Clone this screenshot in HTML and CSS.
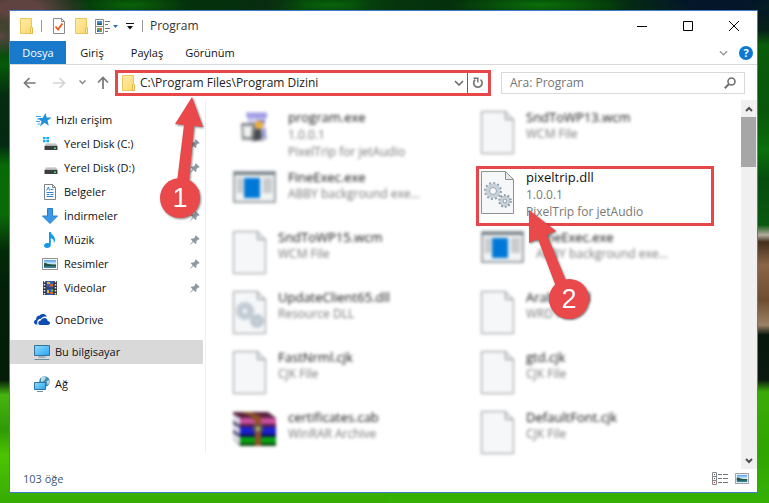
FILE: index.html
```html
<!DOCTYPE html>
<html lang="tr">
<head>
<meta charset="utf-8">
<title>Program</title>
<link rel="stylesheet" href="styles.css">
</head>
<body>
<svg width="0" height="0" class="defs" aria-hidden="true">
  <defs>
    <linearGradient id="gFolder" x1="0" y1="0" x2="1" y2="1"><stop offset="0" stop-color="#ffecaa"/><stop offset="1" stop-color="#fbd869"/></linearGradient>
    <linearGradient id="gScreen" x1="0" y1="0" x2="1" y2="1"><stop offset="0" stop-color="#8fdcff"/><stop offset="1" stop-color="#2aa3f2"/></linearGradient>
    <linearGradient id="gDisk" x1="0" y1="0" x2="0" y2="1"><stop offset="0" stop-color="#e4e4e4"/><stop offset="1" stop-color="#a8a8a8"/></linearGradient>
    <linearGradient id="gPic" x1="0" y1="0" x2="0" y2="1"><stop offset="0" stop-color="#4a9ff0"/><stop offset=".5" stop-color="#d9effb"/><stop offset=".6" stop-color="#2c5d4f"/><stop offset="1" stop-color="#3b87b4"/></linearGradient>
    <symbol id="folder" viewBox="0 0 13 16"><path d="M.5.5h11v8.5l1 1v5.5H.5z" fill="url(#gFolder)" stroke="#eac65c"/><path d="M10.500 15.500V10l1-1 1 1v5.500z" fill="#fff0b8" stroke="#dfb84c"/></symbol>
    <symbol id="pin" viewBox="0 0 10 10"><path d="M5.800.300l3.900 3.700-1 .7-.8-.1-1.500 1.700.1 2-.9.800L3.500 7 .300 9.800 0 9.500 2.700 6.300.700 4.200l.9-.8 2 .1 1.700-1.600-.2-.8z" fill="#8c98a3"/></symbol>
    <symbol id="picture" viewBox="0 0 16 12"><path d="M.5.5h15v11H.5z" fill="#fff" stroke="#8b9196"/><path d="M2 2h12v8H2z" fill="url(#gPic)"/><path d="M2 5c3 0 5 2 12 2v1H2z" fill="#23523f"/></symbol>
    <symbol id="page" viewBox="0 0 33 43"><path d="M.5.5h24l8 8v34H.5z" fill="#f5f7f9" stroke="#8f9295"/><path d="M24.500.500v8h8z" fill="#e6e9eb" stroke="#8f9295"/></symbol>
    <symbol id="gears" viewBox="0 0 28 28">
      <circle cx="9" cy="9" r="5.500" fill="none" stroke="#c6d1da" stroke-width="4"/>
      <circle cx="9" cy="9" r="8" fill="none" stroke="#98a4ae" stroke-width="2" stroke-dasharray="2 2.190"/>
      <circle cx="9" cy="9" r="3.500" fill="#f5f7f9" stroke="#98a4ae"/>
      <circle cx="21" cy="19" r="4" fill="none" stroke="#c6d1da" stroke-width="3"/>
      <circle cx="21" cy="19" r="5.800" fill="none" stroke="#8c98a3" stroke-width="2" stroke-dasharray="1.800 1.850"/>
      <circle cx="21" cy="19" r="2" fill="#f5f7f9" stroke="#8c98a3"/>
    </symbol>
    <symbol id="exe" viewBox="0 0 43 32"><path d="M1 1h41v30H1z" fill="#f2f3f3" stroke="#98a0a4" stroke-width="2"/><path d="M1 1h41v3H1z" fill="#78838a"/><path d="M4 7h6v15H4zM30 7h9v15h-9z" fill="#c9cbcc"/><path d="M11 7h16v20H11z" fill="#0078d7"/></symbol>
    <symbol id="down" viewBox="0 0 10 6"><path d="M1 1l4 4 4-4" fill="none" stroke="currentColor" stroke-width="1.500"/></symbol>
  </defs>
</svg>

<main class="window">
  <header class="titlebar">
    <svg class="t-folder" width="13" height="16"><use href="#folder"/></svg>
    <span class="sep"></span>
    <button class="plain" aria-label="Özellikler"><svg width="12" height="16" viewBox="0 0 12 16"><path d="M.5.5h8l3 3v12H.5z" fill="#fff" stroke="#8a8a8a"/><path d="M8.500.500v3h3" fill="none" stroke="#8a8a8a"/><path d="M2.500 8.500l2.500 3 4.500-6" fill="none" stroke="#e8591c" stroke-width="1.800"/></svg></button>
    <button class="plain" aria-label="Yeni klasör"><svg width="13" height="16"><use href="#folder"/></svg></button>
    <button class="plain view" aria-label="Görünüm seçenekleri"><svg width="23" height="15" viewBox="0 0 23 15"><path d="M.5.5h8v14h-8zM.5 7.500h8" fill="#fff" stroke="#8a8a8a"/><path d="M2 2h5v4H2z" fill="#3d8fd6"/><path d="M2 4.500h5V6H2z" fill="#2d6047"/><path d="M2 9h5v4H2z" fill="#6eaa3c"/><path d="M4.500 9h2v2h-2z" fill="#e45b28"/><path d="M2 11h2v2H2z" fill="#316cc4"/><path d="M10 2.500h5M10 5.500h3M10 9.500h5M10 12.500h3" stroke="#777"/><path d="M18 6h5l-2.500 3z" fill="#2f6ab5"/></svg></button>
    <button class="plain" aria-label="Özelleştir"><svg width="8" height="7" viewBox="0 0 8 7"><path d="M0 .5h8" stroke="#111"/><path d="M1 3h6L4 6.500z" fill="#111"/></svg></button>
    <span class="sep"></span>
    <h1>Program</h1>
    <div class="controls">
      <button aria-label="Simge durumuna küçült"><svg width="11" height="11" viewBox="0 0 11 11"><path d="M0 5.500h10" stroke="#000"/></svg></button>
      <button aria-label="Ekranı kapla"><svg width="10" height="10" viewBox="0 0 10 10"><path d="M.5.5h9v9h-9z" fill="none" stroke="#000"/></svg></button>
      <button aria-label="Kapat"><svg width="10" height="10" viewBox="0 0 10 10"><path d="M0 0l10 10M10 0L0 10" stroke="#000"/></svg></button>
    </div>
  </header>

  <nav class="ribbon">
    <button class="tab active">Dosya</button>
    <button class="tab">Giriş</button>
    <button class="tab">Paylaş</button>
    <button class="tab wide">Görünüm</button>
    <button class="expand" aria-label="Şeridi genişlet"><svg width="9" height="6"><use href="#down"/></svg></button>
    <button class="help" aria-label="Yardım">?</button>
  </nav>

  <div class="navbar">
    <button class="arrow" aria-label="Geri"><svg width="13" height="12" viewBox="0 0 13 12"><path d="M12.500 6H1.500M6.500 1l-5 5 5 5" fill="none" stroke="#777" stroke-width="1.700"/></svg></button>
    <button class="arrow" aria-label="İleri"><svg width="13" height="12" viewBox="0 0 13 12"><path d="M0 6h11.500M6.500 1l5 5-5 5" fill="none" stroke="#d4d4d4" stroke-width="1.700"/></svg></button>
    <button class="recent" aria-label="Son konumlar"><svg width="7" height="5" viewBox="0 0 7 5"><path d="M.5.5l3 3 3-3" fill="none" stroke="#888" stroke-width="1.500"/></svg></button>
    <button class="up" aria-label="Yukarı"><svg width="12" height="13" viewBox="0 0 12 13"><path d="M6 13V1.500M1 6.500l5-5 5 5" fill="none" stroke="#777" stroke-width="1.700"/></svg></button>
    <div class="address">
      <svg width="13" height="16"><use href="#folder"/></svg>
      <input type="text" aria-label="Adres" value="C:\Program Files\Program Dizini">
      <button class="drop" aria-label="Önceki konumlar"><svg width="10" height="6"><use href="#down"/></svg></button>
      <button class="refresh" aria-label="Yenile"><svg width="12" height="12" viewBox="0 0 12 12"><path d="M3.300 2.700A4.200 4.200 0 1 0 8.500 2.700" fill="none" stroke="#777" stroke-width="1.700"/><path d="M1.500 1.300h4.300v4.300" fill="none" stroke="#777" stroke-width="1.500"/></svg></button>
      <svg class="callout one" width="50" height="130" viewBox="0 0 50 130" role="img" aria-label="1">
        <path d="M33 2l11 30-9-1-5 56H18l7-57-9-1z" fill="#e9494b"/>
        <circle cx="21" cy="103" r="20" fill="#e9494b"/>
        <text x="21" y="112">1</text>
      </svg>
    </div>
    <label class="search"><input type="text" aria-label="Ara: Program" placeholder="Ara: Program"><svg width="12" height="12" viewBox="0 0 12 12"><circle cx="7.500" cy="4.500" r="3.500" fill="none" stroke="#707070" stroke-width="1.600"/><path d="M5 7L.8 11.200" stroke="#707070" stroke-width="2"/></svg></label>
  </div>

  <div class="body">
    <aside class="sidebar">
      <a class="row top" href="#"><svg width="16" height="14" viewBox="0 0 16 14"><path d="M9.500 0l1.200 4.600 5-.1-4.200 3 1.300 5.200-4.300-3L4 13.500l1.600-5L2 5.300l4.800-.5z" fill="#1e90dc"/><path d="M0 3.500h5M1 6h3M0 8.500h4M1.500 11h3" stroke="#3aa5ea"/></svg><span>Hızlı erişim</span></a>
      <a class="row" href="#"><svg width="16" height="16" viewBox="0 0 16 16"><path d="M1 1h2.500v2.300H1zM4.300 1H7v2.300H4.300zM1 4h2.500v2.300H1zM4.300 4H7v2.300H4.300z" fill="#12aef0"/><path d="M4 7h10l1.500 3h-13z" fill="url(#gDisk)"/><path d="M2.500 10h13v4h-13z" fill="#3c3f42"/><path d="M12 11.500h2v1.500h-2z" fill="#3ee75f"/></svg><span>Yerel Disk (C:)</span><svg class="pin"><use href="#pin"/></svg></a>
      <a class="row" href="#"><svg width="16" height="16" viewBox="0 0 16 16"><path d="M4 7h10l1.500 3h-13z" fill="url(#gDisk)"/><path d="M2.500 10h13v4h-13z" fill="#3c3f42"/><path d="M12 11.500h2v1.500h-2z" fill="#3ee75f"/></svg><span>Yerel Disk (D:)</span><svg class="pin"><use href="#pin"/></svg></a>
      <a class="row" href="#"><svg width="16" height="16" viewBox="0 0 16 16"><path d="M2.500.5h8l3 3v12h-11z" fill="#fff" stroke="#7d8489"/><path d="M10.500.500v3h3" fill="none" stroke="#7d8489"/><path d="M4.500 6.500l2-3.500 1 3.500M8.500 5.500h3M4.500 8.500h7M4.500 10.500h3M8.500 10.500h3M4.500 12.500h7" fill="none" stroke="#2f86cf"/></svg><span>Belgeler</span><svg class="pin"><use href="#pin"/></svg></a>
      <a class="row" href="#"><svg width="16" height="16" viewBox="0 0 16 16"><path d="M5.500.5h5V8h5L8 15.500.5 8h5z" fill="#3a98e8" stroke="#2a7fcb"/></svg><span>İndirmeler</span><svg class="pin"><use href="#pin"/></svg></a>
      <a class="row" href="#"><svg width="16" height="16" viewBox="0 0 16 16"><path d="M7 0h1.800c.2 3 4.800 4 4.200 8.500-.1 1-.7 2-1.300 2.500.5-3-.5-4-2.900-4.700V13c0 2-2 3-3.800 3S2 15 2 13.600s1.500-2.700 3.200-2.700c.7 0 1.300.1 1.800.4z" fill="#1398ec"/></svg><span>Müzik</span><svg class="pin"><use href="#pin"/></svg></a>
      <a class="row" href="#"><svg width="16" height="12"><use href="#picture"/></svg><span>Resimler</span><svg class="pin"><use href="#pin"/></svg></a>
      <a class="row" href="#"><svg width="16" height="16" viewBox="0 0 16 16"><path d="M1 1h14v14H1z" fill="#33363a"/><path d="M2.500 1v14M13.500 1v14" stroke="#e8e8e8" stroke-width="1.500" stroke-dasharray="1.500 1.500"/><path d="M4.500 1h7v6.500h-7z" fill="#355fb8"/><path d="M4.500 8.500h7V15h-7z" fill="#2e56ac"/><path d="M5 2h3v2H5zM5 10h2v3H5z" fill="#e9b72b"/><path d="M8 4h3v2.500H8zM8 12h3v2H8z" fill="#d95f35"/><path d="M9 9.500h2v2H9z" fill="#73bd40"/></svg><span>Videolar</span><svg class="pin"><use href="#pin"/></svg></a>
      <a class="row root" href="#"><svg width="16" height="12" viewBox="0 0 16 12"><path d="M3.500 10.500H2.200C.9 10.300 0 9.300 0 8c0-1.200.9-2.200 2-2.300C2 3 3.500 1.500 5.800 1.500 6.500.4 7.600 0 9 0c2 0 3.300 1.100 3.900 2.800-3-.8-5 .4-5.700 2-2.300-.2-4 1.200-4 3.500 0 .8.100 1.500.3 2.200z" fill="#0f4db5"/><path d="M6.500 11C5.200 11 4.300 10.100 4.300 8.900c0-1.400 1-2.400 2.500-2.400C7.500 4.800 8.800 3.900 10.300 3.900c2 0 3.200 1.300 3.400 3 1.400.1 2.300.9 2.300 2.100S15.100 11 13.900 11z" fill="#0f4db5"/></svg><span>OneDrive</span></a>
      <a class="row root selected" href="#"><svg width="16" height="15" viewBox="0 0 16 15"><path d="M.5.5h15v10H.5z" fill="url(#gScreen)" stroke="#33739b"/><path d="M4.500 12h7M.5 14.500h15" stroke="#6d8da2"/></svg><span>Bu bilgisayar</span></a>
      <a class="row root" href="#"><svg width="16" height="16" viewBox="0 0 16 16"><circle cx="10.500" cy="5.500" r="5.300" fill="#3f8cb0"/><path d="M7 1.500c2-1.500 4-1 5 0L10 5 7 6zM12.500 5l3-1v3l-2 2z" fill="#b9dbe2"/><path d="M.5 6.500h11v7H.5z" fill="url(#gScreen)" stroke="#2d75a5"/><path d="M3 15.500h6" stroke="#6d8da2"/></svg><span>Ağ</span></a>
    </aside>

    <ul class="files">
      <li class="file three"><svg width="43" height="38" viewBox="0 0 43 38"><path d="M13 1h21l-2 10 1 15H18z" fill="#cfcdf0"/><path d="M13 2h21v5H14z" fill="#a09be6"/><path d="M24 9h8v3h-8z" fill="#7d78c8"/><path d="M8 12h15v17H9z" fill="#85888b"/><path d="M10 15h9l-1 11h-7z" fill="#f1f3f1"/><circle cx="26" cy="14" r="4" fill="#efae36"/><path d="M22 18h6l1 12h-9z" fill="#474a51"/><path d="M29 18h4v9h-4z" fill="#9a9bd0"/><path d="M6 29l8-1 6 3 16-6-5 5z" fill="#b5b6c5"/></svg><div><b>program.exe</b><span>1.0.0.1</span><span>PixelTrip for jetAudio</span></div></li>
      <li class="file"><svg width="33" height="43"><use href="#page"/></svg><div><b>SndToWP13.wcm</b><span>WCM File</span></div></li>
      <li class="file"><svg width="43" height="32"><use href="#exe"/></svg><div><b>FineExec.exe</b><span>ABBY background exe...</span></div></li>
      <li class="file three marked"><svg width="33" height="43" viewBox="0 0 33 43"><use href="#page" width="33" height="43"/><use href="#gears" x="3" y="11" width="28" height="28"/></svg><div><b>pixeltrip.dll</b><span>1.0.0.1</span><span>PixelTrip for jetAudio</span></div>
        <svg class="callout two" width="75" height="125" viewBox="0 0 75 125" role="img" aria-label="2">
          <path d="M10 10l27 21-9 4 22 53-11 4-20-53-9 4z" fill="#e9494b"/>
          <circle cx="50" cy="99" r="20" fill="#e9494b"/>
          <text x="50" y="108">2</text>
        </svg></li>
      <li class="file"><svg width="33" height="43"><use href="#page"/></svg><div><b>SndToWP15.wcm</b><span>WCM File</span></div></li>
      <li class="file"><svg width="43" height="32"><use href="#exe"/></svg><div><b>FineExec.exe</b><span>ABBY background exe...</span></div></li>
      <li class="file"><svg width="33" height="43" viewBox="0 0 33 43"><use href="#page" width="33" height="43"/><use href="#gears" x="3" y="11" width="28" height="28"/></svg><div><b>UpdateClient65.dll</b><span>Resource DLL</span></div></li>
      <li class="file"><svg width="33" height="43"><use href="#page"/></svg><div><b>Arabic.wrd</b><span>WRD File</span></div></li>
      <li class="file"><svg width="33" height="43"><use href="#page"/></svg><div><b>FastNrml.cjk</b><span>CJK File</span></div></li>
      <li class="file"><svg width="33" height="43"><use href="#page"/></svg><div><b>gtd.cjk</b><span>CJK File</span></div></li>
      <li class="file"><svg width="43" height="35" viewBox="0 0 43 35"><path d="M0 1h35l8 6v28H7L0 28z" fill="#56203e"/><path d="M0 3l7 4v27l-7-6z" fill="#dcdce8"/><path d="M0 10l7 4v3l-7-4zM0 19l7 4v3l-7-4z" fill="#44405e"/><path d="M7 7h36v6H7z" fill="#c9509f"/><path d="M7 13h36v3H7z" fill="#5b1c48"/><path d="M7 16h36v7H7z" fill="#1a20cf"/><path d="M7 23h36v3H7z" fill="#0c1060"/><path d="M7 26h36v6H7z" fill="#09a312"/><path d="M7 32h36v3H7z" fill="#0a4a10"/><path d="M8 1l11 5v3h9V6L18 1z" fill="#8c5427"/><path d="M22 6h6v29h-6z" fill="#93512a"/><path d="M20 14h10v7H20z" fill="#5b554a"/><path d="M23 16h4v4h-4z" fill="#c7b276"/></svg><div><b>certificates.cab</b><span>WinRAR Archive</span></div></li>
      <li class="file"><svg width="33" height="43"><use href="#page"/></svg><div><b>DefaultFont.cjk</b><span>CJK File</span></div></li>
    </ul>

    <div class="scrollbar">
      <button aria-label="Yukarı kaydır"><svg width="8" height="6" viewBox="0 0 8 6"><path d="M1 5l3-3 3 3" fill="none" stroke="#505050" stroke-width="2"/></svg></button>
      <div class="thumb"></div>
      <button class="last" aria-label="Aşağı kaydır"><svg width="8" height="6" viewBox="0 0 8 6"><path d="M1 1l3 3 3-3" fill="none" stroke="#505050" stroke-width="2"/></svg></button>
    </div>
  </div>

  <footer class="status">
    <span>103 öğe</span>
    <button class="plain" aria-label="Ayrıntılar"><svg width="16" height="13" viewBox="0 0 16 13"><path d="M.5.5h4v12h-4zM.5 4.500h4M.5 8.500h4" fill="#fff" stroke="#888"/><path d="M6 2.500h4M11 2.500h5M6 6.500h4M11 6.500h5M6 10.500h4M11 10.500h5" stroke="#777"/><path d="M2 2h1v1H2zM2 6h1v1H2z" fill="#357"/><path d="M2 10h1v1H2z" fill="#d22"/></svg></button>
    <button class="plain" aria-label="Büyük simgeler"><svg width="14" height="11" viewBox="0 0 16 12" preserveAspectRatio="none"><use href="#picture"/></svg></button>
  </footer>
</main>
</body>
</html>
```
FILE: styles.css
```css
* { box-sizing: border-box; }

body {
  margin: 0;
  min-height: 100vh;
  display: flex;
  padding: 10px 11px 10px 9px;
  font: 12px/16px "Open Sans", "Noto Sans", sans-serif;
  color: #111;
  background:
    radial-gradient(ellipse 70px 26px at 20px 8px, #5f4341 0 30%, transparent),
    radial-gradient(ellipse 30px 20px at 0 36px, #5d4743, transparent),
    radial-gradient(ellipse 40px 14px at 265px 4px, #092b12, transparent),
    radial-gradient(ellipse 50px 14px at 400px 6px, #06350d, transparent),
    radial-gradient(ellipse 110px 30px at 720px 0, #04162a 0 30%, transparent),
    radial-gradient(ellipse 60px 12px at 130px 5px, #0a6408, transparent),
    radial-gradient(ellipse 80px 12px at 330px 5px, #08650a, transparent),
    radial-gradient(ellipse 90px 12px at 540px 5px, #0a7008, transparent),
    linear-gradient(#04300c, #04300c) 0 0 / 100% 10px no-repeat,
    linear-gradient(to bottom, #062019 30px, #0a5d0a 45px, #08550b 110px, #0c6f0c 150px, #054c10 180px, #0b5a10 225px, #b6aba0 235px, #44301d 242px, #8a6447 265px, #6d4d30 300px, #9b8264 325px, #06170c 335px, #0a1a10 380px, #3cab08 392px, #2fa500 450px, #37b106 100%) 100% 0 / 50% 100% no-repeat,
    linear-gradient(to bottom, #063f0c 40px, #075a09 65px, #042c10 95px, #032a12 145px, #086a07 165px, #0a6a08 215px, #032b08 250px, #022009 285px, #021c08 380px, #47b510 395px, #2f9a06 430px, #4dc400 455px, #36ab03 100%);
}

h1 { margin: 0; font-size: 12px; font-weight: 400; line-height: 16px; color: #333; }
svg { flex: none; display: block; }
.defs { position: absolute; }

button {
  border: 0;
  padding: 0;
  background: none;
  font: inherit;
  color: inherit;
  display: flex;
  align-items: center;
  justify-content: center;
}

input {
  flex: 1;
  min-width: 0;
  border: 0;
  padding: 0;
  background: none;
  outline: 0;
  font: inherit;
  color: #222;
}

.window {
  flex: 1;
  min-width: 0;
  display: flex;
  flex-direction: column;
  background: #fff;
  border: 1px solid #4479cc;
}

.titlebar { display: flex; align-items: center; height: 30px; padding-left: 10px; }
.titlebar .plain { margin-right: 10px; }
.titlebar .plain.view { margin-right: 8px; }
.titlebar .plain + .plain.view { margin-left: -3px; }
.titlebar .sep { width: 1px; height: 12px; margin-right: 11px; background: #999; }
.titlebar .t-folder { margin-right: 8px; }
.titlebar .plain + .sep { margin: 0 7px 0 -2px; }
.controls { display: flex; align-self: stretch; margin-left: auto; }
.controls button { width: 46px; }

.ribbon { display: flex; height: 24px; border-bottom: 1px solid #d9dadc; font-size: 11px; }
.tab { width: 56px; }
.tab.active { margin-right: -2px; background: #1979ca; color: #fff; }
.tab + .tab { margin-right: -1px; }
.tab.wide { width: 72px; }
.expand { margin-left: auto; margin-right: 11px; color: #999; }
.help {
  align-self: center;
  width: 14px;
  height: 14px;
  margin-right: 4px;
  border-radius: 50%;
  background: #0b78d4;
  color: #fff;
  font-weight: 700;
}

.navbar { display: flex; align-items: center; height: 35px; padding: 0 12px 0 4px; }
.arrow { width: 30px; height: 24px; }
.recent { width: 16px; height: 24px; }
.up { width: 25px; height: 24px; }

.address {
  position: relative;
  flex: 366;
  display: flex;
  align-items: center;
  gap: 5px;
  height: 26px;
  padding-left: 4px;
  border: 3px solid #e8474a;
}
.drop { width: 16px; color: #666; }
.refresh { align-self: stretch; width: 21px; margin-left: -5px; border-left: 1px solid #1979ca; }

.search {
  flex: 226;
  display: flex;
  align-items: center;
  height: 22px;
  margin-left: 10px;
  padding: 0 8px;
  border: 1px solid #d9d9d9;
}
.search input::placeholder { color: #757575; opacity: 1; }

.callout { position: absolute; z-index: 2; filter: drop-shadow(1px 1px 1px rgba(0, 0, 0, .5)); pointer-events: none; }
.callout text { font: 27px "Liberation Sans", Arial, sans-serif; text-anchor: middle; fill: #fff; }
.callout.one { left: 41px; top: 22px; }
.callout.two { left: 40px; top: 31px; }

.body { flex: 1; display: flex; }

.sidebar { width: 196px; padding: 8px 2px 0 0; margin-bottom: 16px; border-right: 1px solid #eee; font-size: 11px; }
.row {
  display: flex;
  align-items: center;
  gap: 6px;
  height: 24px;
  padding: 0 3px 0 32px;
  color: #111;
  text-decoration: none;
}
.row.top { padding-left: 26px; gap: 4px; }
.row.root { padding-left: 24px; margin-top: 8px; gap: 5px; }
.row.selected { background: #d9d9d9; }
.row .pin { width: 10px; height: 10px; margin-left: auto; }

.files {
  flex: 1;
  display: grid;
  grid-template-columns: 1fr 1fr;
  grid-auto-rows: 60px;
  margin: 0;
  padding: 6px 17px 0 22px;
  list-style: none;
}
.file {
  position: relative;
  display: flex;
  gap: 12px;
  margin-right: 10px;
  padding-left: 2px;
  border: 3px solid transparent;
  white-space: nowrap;
}
.file > svg:first-child { margin-top: 2px; }
.file b, .file span { display: block; font-weight: 400; }
.file b { font-size: 13px; line-height: 17px; }
.file span { color: #777; }
.file.three { line-height: 17px; }
.file:not(.marked) > svg, .file:not(.marked) > div { filter: blur(1px) blur(1px); }
.file.marked { z-index: 1; border-color: #e8474a; }

.scrollbar { display: flex; flex-direction: column; width: 16px; background: #f0f0f0; }
.scrollbar button { height: 17px; }
.scrollbar .last { margin-top: auto; }
.thumb { height: 50px; margin-right: 1px; background: #a6a6a6; }

.status { display: flex; align-items: center; height: 23px; padding: 0 8px 4px 13px; font-size: 11px; color: #405672; }
.status span { margin-right: auto; }
.status .plain { margin-left: 7px; }
```
